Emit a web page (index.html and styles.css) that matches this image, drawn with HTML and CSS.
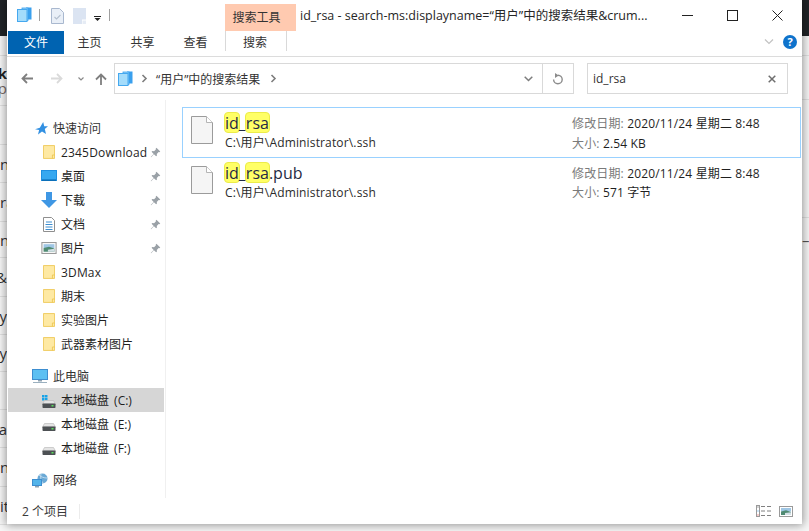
FILE: index.html
```html
<!DOCTYPE html>
<html lang="zh">
<head>
<meta charset="utf-8">
<title>id_rsa</title>
<link rel="stylesheet" href="styles.css">
</head>
<body>
<svg class="sprite" width="0" height="0" aria-hidden="true">
  <defs>
    <symbol id="stack" viewBox="0 0 15 15">
      <rect x="9" y="0.5" width="5.5" height="12" fill="#3aa0ee"/>
      <rect x="5" y="1" width="6" height="12.5" fill="#8fd0f8" stroke="#3aa0ee" stroke-width=".8"/>
      <rect x="0.5" y="2.5" width="9.5" height="12" fill="#a4dcfb" stroke="#45a8ef"/>
    </symbol>
    <symbol id="folder" viewBox="0 0 14 16">
      <path d="M.5.5h13v15H.5z" fill="#fee9a3" stroke="#eec64f"/>
      <path d="M11 11.5v4M11 11.5h2.5" fill="none" stroke="#eec64f"/>
    </symbol>
    <symbol id="pin" viewBox="0 0 12 12">
      <path d="M7 .8l4.2 4.2-1 .7-.8-.2-2 2 .2 1.8-.9.9L4.3 8 1.2 11.2.8 10.8 4 7.7 1.7 5.3l.9-.9 1.8.2 2-2-.2-.8z" fill="#9aa1a7"/>
    </symbol>
    <symbol id="drive" viewBox="0 0 14 8">
      <path d="M2.5.5h9L13.5 4h-13z" fill="#e4e4e4" stroke="#bdbdbd" stroke-width=".7"/>
      <rect x=".5" y="3.5" width="13" height="4.5" rx=".7" fill="#4d5154"/>
      <rect x="9.5" y="5" width="2" height="1.5" fill="#58e05a"/>
    </symbol>
    <symbol id="sheet" viewBox="0 0 22 28">
      <path d="M.5.5h15l6 6v21H.5z" fill="#f5f5f5" stroke="#9b9b9b"/>
      <path d="M15.5.5v6h6" fill="#fff" stroke="#b5b5b5"/>
    </symbol>
    <symbol id="chev" viewBox="0 0 7 9">
      <path d="M1.5 1l3.500 3.500-3.500 3.500" fill="none" stroke="#7d7d7d" stroke-width="1.600"/>
    </symbol>
    <symbol id="photo" viewBox="0 0 14 11">
      <rect x=".5" y=".5" width="13" height="10" fill="#fff" stroke="#9a9a9a"/>
      <rect x="2" y="2" width="10" height="3.500" fill="#9fc6e4"/>
      <path d="M2 5.500l5-1.200 5 1.700V9H2z" fill="#4f8a72"/>
      <path d="M6 7l6-.8V9H6z" fill="#d3e0e6"/>
    </symbol>
  </defs>
</svg>

<div class="stage">
  <div class="backdrop">
    <div class="back-left">
      <div class="back-dark"></div>
      <div class="back-row"></div>
      <div class="back-row back-stack"><span class="peek strong">k</span><span class="peek muted">p</span></div>
      <div class="back-row"></div>
      <div class="back-row clip-left"><span class="peek">n</span></div>
      <div class="back-row clip-left"><span class="peek">ra</span></div>
      <div class="back-row clip-left"><span class="peek">n</span></div>
      <div class="back-row"><span class="peek">&amp;</span></div>
      <div class="back-row"><span class="peek">cy</span></div>
      <div class="back-row"><span class="peek">cy</span></div>
      <div class="back-row"></div>
      <div class="back-row"><span class="peek">a</span></div>
      <div class="back-row clip-left"><span class="peek">no</span></div>
      <div class="back-row clip-left"><span class="peek">ite</span></div>
    </div>
    <div class="back-right">
      <div class="back-dark"></div>
      <div class="back-row"></div>
      <div class="back-row"></div>
      <div class="back-row"></div>
      <div class="back-row back-note"><span class="dash">–</span><span class="tag"></span></div>
    </div>
  </div>

  <div class="window">
    <header class="titlebar">
      <div class="qat">
        <svg class="qat-stack" width="15" height="15"><use href="#stack"/></svg>
        <span class="qat-sep"></span>
        <svg class="qat-doc" width="13" height="16" viewBox="0 0 13 16"><path d="M.5.5h8l4 4v11H.5z" fill="#e9eff7" stroke="#a9b8cf"/><path d="M3.500 9l2 2 4-4" fill="none" stroke="#b3bfce" stroke-width="1.100"/></svg>
        <svg class="qat-blank" width="13" height="16" viewBox="0 0 13 16"><path d="M0 0h13v11.500h-4V16H0z" fill="#dbe4f2"/><path d="M9.500 12.500H13V16H9.500z" fill="#e6ecf5"/></svg>
        <svg class="qat-drop" width="7" height="5" viewBox="0 0 7 5"><path d="M0 0h7v1H0z" fill="#222"/><path d="M.5 2h6L3.500 5z" fill="#222"/></svg>
        <span class="qat-sep qat-sep-last"></span>
      </div>
      <div class="context-tab">搜索工具</div>
      <div class="title">id_rsa - search-ms:displayname=“用户”中的搜索结果&amp;crum...</div>
      <div class="win-buttons">
        <svg width="11" height="11" viewBox="0 0 11 11"><path d="M0 5.500h11" stroke="#222" fill="none"/></svg>
        <svg width="11" height="11" viewBox="0 0 11 11"><rect x=".5" y=".5" width="10" height="10" fill="none" stroke="#222"/></svg>
        <svg width="11" height="11" viewBox="0 0 11 11"><path d="M.5.500l10 10M10.500.500l-10 10" stroke="#222" fill="none"/></svg>
      </div>
    </header>

    <nav class="ribbon">
      <div class="tab tab-file">文件</div>
      <div class="tab">主页</div>
      <div class="tab">共享</div>
      <div class="tab">查看</div>
      <div class="tab tab-search">搜索</div>
      <div class="ribbon-end">
        <svg width="10" height="6" viewBox="0 0 10 6"><path d="M1 .5l4 4 4-4" fill="none" stroke="#c2c2c2" stroke-width="1.200"/></svg>
        <span class="help">?</span>
      </div>
    </nav>

    <div class="addressbar">
      <div class="nav-buttons">
        <svg width="12" height="11" viewBox="0 0 12 11"><path d="M12 5.500H2M6 1L1.500 5.500 6 10" fill="none" stroke="#7f7f7f" stroke-width="1.800"/></svg>
        <svg class="nav-forward" width="12" height="11" viewBox="0 0 12 11"><path d="M0 5.500h10M6 1l4.500 4.500L6 10" fill="none" stroke="#dadada" stroke-width="1.800"/></svg>
        <svg class="nav-recent" width="6" height="4" viewBox="0 0 6 4"><path d="M.5.500L3 3 5.500.500" fill="none" stroke="#8a8a8a" stroke-width="1.200"/></svg>
        <svg class="nav-up" width="12" height="12" viewBox="0 0 12 12"><path d="M6 12V2M1 6.500L6 1.500l5 5" fill="none" stroke="#7f7f7f" stroke-width="1.800"/></svg>
      </div>
      <div class="path-box">
        <svg class="path-icon" width="15" height="15"><use href="#stack"/></svg>
        <svg class="path-chev" width="7" height="9"><use href="#chev"/></svg>
        <span class="path-text">“用户”中的搜索结果</span>
        <svg class="path-chev" width="7" height="9"><use href="#chev"/></svg>
        <svg class="path-drop" width="9" height="6" viewBox="0 0 9 6"><path d="M.7.700L4.500 4.500 8.300.700" fill="none" stroke="#7d7d7d" stroke-width="1.500"/></svg>
        <div class="path-refresh">
          <svg width="12" height="12" viewBox="0 0 12 12"><path d="M6 2.200A4.300 4.300 0 1 1 1.600 6.500" fill="none" stroke="#8c8c8c" stroke-width="1.400"/><path d="M3 0v5l3.800-2.500z" fill="#8c8c8c"/></svg>
        </div>
      </div>
      <div class="search-box">
        <span class="search-text">id_rsa</span>
        <svg width="8" height="8" viewBox="0 0 8 8"><path d="M.7.700l6.600 6.600M7.300.700L.7 7.300" fill="none" stroke="#6e6e6e" stroke-width="1.500"/></svg>
      </div>
    </div>

    <main class="main">
      <aside class="sidebar">
        <div class="row row-head">
          <svg class="star" width="13" height="13" viewBox="0 0 13 13"><path d="M8.200 0l1 4.200H13L9.800 7l1.200 5L7 9.400 3 12.500l1.100-4.600L0 7.200l4.800-1.400z" fill="#3290e2"/></svg>
          <span>快速访问</span>
        </div>
        <div class="row row-sub"><span class="ico"><svg width="12" height="16"><use href="#folder"/></svg></span><span class="label label-latin">2345Download</span><svg class="pin" width="11" height="11"><use href="#pin"/></svg></div>
        <div class="row row-sub"><span class="ico"><svg width="16" height="12" viewBox="0 0 16 12"><rect width="16" height="11" fill="#1f8fe0"/><rect x="1" y="1" width="14" height="8.500" fill="#36a8f0"/><path d="M1 9.500h14V11H1z" fill="#0c6fb8"/></svg></span><span class="label">桌面</span><svg class="pin" width="11" height="11"><use href="#pin"/></svg></div>
        <div class="row row-sub"><span class="ico"><svg width="16" height="16" viewBox="0 0 16 16"><path d="M5 0h6v8h5l-8 8-8-8h5z" fill="#3f97e4"/></svg></span><span class="label">下载</span><svg class="pin" width="11" height="11"><use href="#pin"/></svg></div>
        <div class="row row-sub"><span class="ico"><svg width="12" height="15" viewBox="0 0 12 15"><path d="M.5.500h8l3 3v11H.5z" fill="#fff" stroke="#8f8f8f"/><path d="M3 5h6M2.500 7.500h7M2.500 10h7M2.500 12.500h7" stroke="#3d8ed0"/></svg></span><span class="label">文档</span><svg class="pin" width="11" height="11"><use href="#pin"/></svg></div>
        <div class="row row-sub"><span class="ico"><svg width="16" height="12"><use href="#photo"/></svg></span><span class="label">图片</span><svg class="pin" width="11" height="11"><use href="#pin"/></svg></div>
        <div class="row row-sub"><span class="ico"><svg width="12" height="16"><use href="#folder"/></svg></span><span class="label label-latin">3DMax</span></div>
        <div class="row row-sub"><span class="ico"><svg width="12" height="16"><use href="#folder"/></svg></span><span class="label">期末</span></div>
        <div class="row row-sub"><span class="ico"><svg width="12" height="16"><use href="#folder"/></svg></span><span class="label">实验图片</span></div>
        <div class="row row-sub"><span class="ico"><svg width="12" height="16"><use href="#folder"/></svg></span><span class="label">武器素材图片</span></div>

        <div class="row row-head group-gap">
          <svg class="wide-ico" width="16" height="14" viewBox="0 0 16 14"><rect x=".5" y=".5" width="15" height="10" fill="#5cc0f2" stroke="#3d8ed0"/><path d="M6 11h4v1.500H6z" fill="#8fa3b2"/><path d="M1 13h14v1H1z" fill="#9bb0bf"/></svg>
          <span>此电脑</span>
        </div>
        <div class="row row-sub row-selected"><span class="ico ico-sys"><svg width="14" height="13" viewBox="0 0 14 13"><path d="M0 0h2.500v2.500H0zM3 0h2.500v2.500H3zM0 3h2.500v2.500H0zM3 3h2.500v2.500H3z" fill="#17a3e8"/><use href="#drive" x="0" y="5" width="14" height="8"/></svg></span><span class="label label-drive">本地磁盘 (C:)</span></div>
        <div class="row row-sub"><span class="ico ico-drive"><svg width="14" height="8"><use href="#drive"/></svg></span><span class="label label-drive">本地磁盘 (E:)</span></div>
        <div class="row row-sub"><span class="ico ico-drive"><svg width="14" height="8"><use href="#drive"/></svg></span><span class="label label-drive">本地磁盘 (F:)</span></div>

        <div class="row row-head group-gap">
          <svg class="wide-ico" width="16" height="15" viewBox="0 0 16 15"><circle cx="10.500" cy="5.500" r="5" fill="#6aa9d6"/><path d="M7 2c2 2 5 3 8 3M9 1c-1 3 0 7 2 9" stroke="#cfe3f1" fill="none" stroke-width=".8"/><rect x=".5" y="6.500" width="9" height="6" fill="#53b4ea" stroke="#3d8ed0"/><path d="M3 13h4v1.500H3z" fill="#8fa3b2"/></svg>
          <span>网络</span>
        </div>
      </aside>

      <section class="results">
        <article class="item item-selected">
          <svg class="file" width="22" height="28"><use href="#sheet"/></svg>
          <div class="names">
            <div class="name"><mark>id</mark>_<mark>rsa</mark></div>
            <div class="where">C:\用户\Administrator\.ssh</div>
          </div>
          <div class="meta">
            <div><span class="key">修改日期:</span> 2020/11/24 星期二 8:48</div>
            <div><span class="key">大小:</span> 2.54 KB</div>
          </div>
        </article>
        <article class="item item-plain">
          <svg class="file" width="22" height="28"><use href="#sheet"/></svg>
          <div class="names">
            <div class="name"><mark>id</mark>_<mark>rsa</mark>.pub</div>
            <div class="where">C:\用户\Administrator\.ssh</div>
          </div>
          <div class="meta">
            <div><span class="key">修改日期:</span> 2020/11/24 星期二 8:48</div>
            <div><span class="key">大小:</span> 571 字节</div>
          </div>
        </article>
      </section>
    </main>

    <footer class="statusbar">
      <span class="count">2 个项目</span>
      <span class="status-sep"></span>
      <div class="views">
        <svg width="16" height="12" viewBox="0 0 16 12"><rect x=".5" y=".5" width="3" height="11" fill="#fff" stroke="#9a9a9a"/><path d="M1.500 1.500h1v1h-1z" fill="#555"/><path d="M1.500 5.500h1v1h-1z" fill="#3d9ae8"/><path d="M1.500 9.500h1v1h-1z" fill="#d83b3b"/><path d="M5 1.500h4M11 1.500h4M5 6h4M11 6h4M5 10.500h4M11 10.500h4" stroke="#808080"/></svg>
        <svg width="14" height="11"><use href="#photo"/></svg>
      </div>
    </footer>
  </div>
</div>
</body>
</html>
```
FILE: styles.css
```css
* { box-sizing: border-box; }

html, body {
  margin: 0;
  padding: 0;
  overflow: hidden;
}

body {
  font-family: "Open Sans", "Noto Sans CJK SC", sans-serif;
  font-size: 12px;
  color: #1c1c1c;
}

.sprite { position: absolute; }

.stage {
  position: relative;
  width: 809px;
  height: 531px;
  overflow: hidden;
  background: #f7f7f7;
}

/* page behind the window */
.backdrop {
  display: flex;
  justify-content: space-between;
  height: 531px;
  font-size: 15px;
  color: #333;
}

.back-left,
.back-right {
  display: grid;
  width: 7px;
}

.back-left {
  grid-template-rows: 36px 20px 50px 39px 38px 39px 36px 39px 38px 37px 38px 38px 39px 38px;
}

.back-right {
  grid-template-rows: 36px 20px 44px 118px 194px;
}

.back-dark { background: #202427; }

.back-row {
  display: flex;
  align-items: center;
  justify-content: flex-end;
  overflow: hidden;
  white-space: nowrap;
  border-bottom: 1px solid #e1e1e1;
}

.clip-left { justify-content: flex-start; }

.back-stack {
  flex-direction: column;
  align-items: flex-end;
  justify-content: center;
  line-height: 15px;
}

.back-note {
  justify-content: flex-start;
  align-items: flex-start;
  padding-top: 16px;
  border-bottom: 0;
}

.dash { color: #555; line-height: 12px; }
.tag { width: 3px; height: 8px; margin-top: 3px; background: #7fb4d4; }

.strong { font-weight: 700; color: #222; }
.muted { color: #7a6a66; }

/* window */
.window {
  position: absolute;
  left: 7px;
  top: 0;
  display: flex;
  flex-direction: column;
  width: 795px;
  height: 524px;
  background: #fff;
  box-shadow: 0 0 9px 1px rgba(0, 0, 0, 0.42);
}

.titlebar {
  display: flex;
  height: 31px;
  flex: none;
}

.qat {
  display: flex;
  align-items: flex-start;
  width: 218px;
  padding: 7px 0 0 10px;
}

.qat-sep {
  width: 1px;
  height: 12px;
  margin: 2px 0 0 7px;
  background: #a0a0a0;
}

.qat-doc { margin: 1px 0 0 11px; }
.qat-blank { margin: 1px 0 0 9px; }
.qat-drop { margin: 9px 0 0 8px; }
.qat-sep-last { margin-left: 8px; }

.context-tab {
  width: 71px;
  height: 27px;
  margin-top: 4px;
  padding-right: 8px;
  background: #ffcab0;
  text-align: center;
  line-height: 27px;
  color: #333;
}

.title {
  margin-left: 4px;
  width: 372px;
  padding-top: 7px;
  font-size: 12.500px;
  line-height: 17px;
  white-space: nowrap;
  color: #262626;
}

.win-buttons {
  display: flex;
  gap: 34px;
  padding: 10px 0 0 10px;
  align-items: flex-start;
}

.ribbon {
  display: flex;
  flex: none;
  height: 26px;
  border-bottom: 1px solid #dcdcdc;
  padding-left: 1px;
}

.tab {
  width: 53px;
  height: 23px;
  padding-right: 2px;
  text-align: center;
  line-height: 24px;
  color: #333;
}

.tab-file {
  width: 56px;
  padding-right: 0;
  background: #0063b1;
  color: #fff;
}

.tab-search {
  width: 62px;
  height: 20px;
  margin-left: 2px;
  border-left: 1px solid #d9d9d9;
  border-right: 1px solid #d9d9d9;
  line-height: 24px;
}

.ribbon-end {
  display: flex;
  align-items: center;
  gap: 9px;
  margin-left: auto;
  padding: 0 5px 4px 0;
}

.help {
  display: block;
  width: 14px;
  height: 14px;
  border-radius: 50%;
  background: #0f73cc;
  color: #fff;
  font-size: 11px;
  font-weight: 700;
  line-height: 14px;
  text-align: center;
}

.addressbar {
  display: flex;
  flex: none;
  height: 43px;
  padding-top: 6px;
  padding-bottom: 6px;
}

.nav-buttons {
  display: flex;
  align-items: center;
  width: 107px;
  padding-left: 14px;
}

.nav-forward { margin-left: 18px; }
.nav-recent { margin-left: 15px; }
.nav-up { margin-left: 11px; }

.path-box {
  display: flex;
  align-items: center;
  width: 460px;
  height: 31px;
  padding-left: 3px;
  border: 1px solid #d9d9d9;
  color: #333;
}

.path-chev { margin-left: 8px; flex: none; }
.path-text { margin-left: 8px; width: 106px; white-space: nowrap; }
.path-icon { flex: none; }
.path-drop { margin-left: auto; margin-right: 9px; }

.path-refresh {
  display: flex;
  align-items: center;
  justify-content: center;
  width: 31px;
  height: 29px;
  border-left: 1px solid #d9d9d9;
}

.search-box {
  display: flex;
  align-items: center;
  justify-content: space-between;
  width: 201px;
  height: 31px;
  margin-left: 13px;
  padding: 0 11px 0 5px;
  border: 1px solid #d9d9d9;
  color: #333;
}

.main {
  display: flex;
  flex: 1;
  min-height: 0;
}

.sidebar {
  width: 159px;
  flex: none;
  padding: 16px 0 0 1px;
  border-right: 1px solid #f0f0f0;
}

.row {
  display: flex;
  align-items: center;
  width: 156px;
  height: 24px;
  color: #1f1f1f;
}

.row-head { padding-left: 27px; gap: 5px; color: #333; }
.row-head .wide-ico { margin-left: -3px; }

.row-selected { background: #d6d6d6; }

.ico {
  display: flex;
  align-items: center;
  justify-content: center;
  width: 18px;
  margin-left: 32px;
  margin-right: 3px;
  flex: none;
}

.ico-sys { padding-top: 2px; }
.ico-drive { padding-top: 6px; }

.label { white-space: nowrap; }
.label-latin { letter-spacing: 0.17px; }
.label-drive { word-spacing: 2px; }

.pin { margin-left: auto; margin-right: 3px; flex: none; }

.group-gap { margin-top: 8px; }

.results {
  flex: 1;
  padding: 7px 1px 0 16px;
}

.item {
  display: flex;
  height: 50px;
  padding: 8px 0 0 8px;
  border: 1px solid transparent;
}

.item-selected {
  height: 51px;
  border-color: #99d1ff;
}

.item-plain { padding-top: 7px; }
.item-plain .meta { line-height: 19px; }

.file { flex: none; }

.names {
  width: 347px;
  margin-left: 12px;
  flex: none;
}

.name {
  margin-top: -4px;
  font-size: 16px;
  line-height: 22px;
  color: #1f2a44;
}

mark {
  display: inline-block;
  margin: 0 -1px;
  height: 21px;
  line-height: 20px;
  border: 1px solid #ecec4a;
  border-radius: 4px;
  background: #ffff66;
  color: inherit;
}

.where {
  line-height: 17px;
  letter-spacing: 0.15px;
  color: #2b2b2b;
  white-space: nowrap;
}

.meta {
  margin-top: -2px;
  line-height: 20px;
  letter-spacing: 0.15px;
  white-space: nowrap;
  color: #1f1f1f;
}

.key { color: #7a7a7a; }

.statusbar {
  display: flex;
  align-items: center;
  flex: none;
  height: 26px;
  padding: 0 9px 0 15px;
}

.count {
  width: 57px;
  color: #3a3a3a;
}

.status-sep {
  width: 1px;
  height: 15px;
  background: #ececec;
}

.views {
  display: flex;
  align-items: center;
  gap: 7px;
  margin-left: auto;
}
```
